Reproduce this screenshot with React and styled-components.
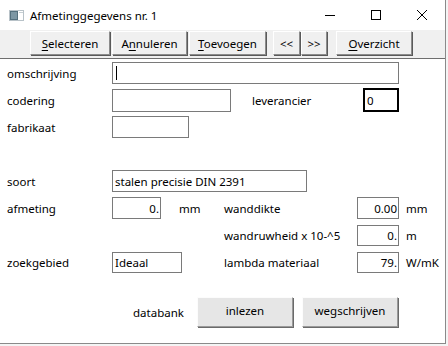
import styled, { createGlobalStyle } from "styled-components";

const GlobalStyle = createGlobalStyle`
  html, body {
    margin: 0;
    padding: 0;
    background: #f4f4f4;
  }
  body {
    font-family: "Noto Sans", "Open Sans", sans-serif;
    font-size: 11.5px;
    color: #000;
  }
`;

const Window = styled.div`
  width: 446px;
  height: 344px;
  box-sizing: border-box;
  background: #fff;
  border-right: 1px solid #8a8a8a;
  border-bottom: 1px solid #8a8a8a;
  display: flex;
  flex-direction: column;
  overflow: hidden;
`;

const TitleBar = styled.div`
  height: 30px;
  display: flex;
  align-items: center;
  background: #fff;
  padding-left: 9px;
`;

const Title = styled.span`
  margin-left: 6px;
  font-size: 11.5px;
  flex: 1;
`;

const Controls = styled.div`
  display: flex;
  height: 30px;
`;

const ControlButton = styled.div`
  width: ${(p) => p.$w}px;
  height: 30px;
  display: flex;
  align-items: center;
  justify-content: center;
`;

const Toolbar = styled.div`
  height: 29px;
  box-sizing: border-box;
  background: #f0f0f0;
  border-bottom: 1px solid #6e6e6e;
  display: flex;
  align-items: flex-start;
  padding: 1px 0 0 30px;
`;

const ToolButton = styled.div`
  width: ${(p) => p.$w}px;
  height: 24px;
  margin-left: ${(p) => p.$gap || 0}px;
  box-sizing: border-box;
  border-top: 1px solid #fff;
  border-left: 1px solid #fff;
  border-right: 1px solid #8c8c8c;
  border-bottom: 1px solid #8c8c8c;
  box-shadow: 1px 1px 0 #5a5a5a;
  display: flex;
  align-items: center;
  justify-content: center;
  font-size: 11.5px;
  u {
    text-decoration: underline;
    text-underline-offset: 2px;
  }
`;

const Content = styled.div`
  flex: 1;
  display: flex;
  flex-direction: column;
  padding-top: 3px;
`;

const Row = styled.div`
  display: flex;
  align-items: center;
  height: ${(p) => p.$h}px;
  margin-top: ${(p) => p.$gap || 0}px;
`;

const Label = styled.div`
  width: ${(p) => p.$w}px;
  padding-left: ${(p) => p.$pad ?? 0}px;
  box-sizing: border-box;
  font-size: 11.5px;
  flex-shrink: 0;
`;

const Spacer = styled.div`
  width: ${(p) => p.$w}px;
  flex-shrink: 0;
`;

const Field = styled.div`
  width: ${(p) => p.$w}px;
  height: ${(p) => p.$h || 22}px;
  box-sizing: border-box;
  border: ${(p) => (p.$focus ? "2px solid #000" : "1px solid #7a7a7a")};
  display: flex;
  align-items: center;
  justify-content: ${(p) => (p.$right ? "flex-end" : "flex-start")};
  padding: 0 ${(p) => (p.$right ? 1 : 2)}px 0 2px;
  font-size: 11.5px;
  flex-shrink: 0;
`;

const Caret = styled.span`
  width: 1px;
  height: 14px;
  background: #000;
  margin-left: 1px;
`;

const Unit = styled.div`
  margin-left: ${(p) => p.$gap}px;
  width: ${(p) => p.$w}px;
  font-size: 11.5px;
  flex-shrink: 0;
`;

const Button = styled.div`
  width: ${(p) => p.$w}px;
  height: 30px;
  margin-left: ${(p) => p.$gap || 0}px;
  box-sizing: border-box;
  background: #e6e6e6;
  border-top: 1px solid #fcfcfc;
  border-left: 1px solid #fcfcfc;
  border-right: 1px solid #9a9a9a;
  border-bottom: 1px solid #9a9a9a;
  box-shadow: 1px 1px 0 #6a6a6a;
  display: flex;
  align-items: center;
  justify-content: center;
  padding-bottom: 3px;
  font-size: 11.5px;
  flex-shrink: 0;
`;

const AppIcon = () => (
  <svg width="15" height="11" viewBox="0 0 15 11">
    <rect x="0.5" y="0.5" width="14" height="10" fill="#fff" stroke="#b8c2c8" />
    <rect x="1" y="1" width="8" height="9" fill="#55707e" />
    <rect x="2" y="2" width="6" height="7" fill="#7d97a4" />
    <rect x="10" y="2" width="4" height="1" fill="#c8d0d4" />
  </svg>
);

export default function App() {
  return (
    <>
      <GlobalStyle />
      <Window>
        <TitleBar>
          <AppIcon />
          <Title>Afmetinggegevens nr. 1</Title>
          <Controls>
            <ControlButton $w={46}>
              <svg width="10" height="10" viewBox="0 0 10 10">
                <path d="M0 5.5H10" stroke="#000" strokeWidth="1" />
              </svg>
            </ControlButton>
            <ControlButton $w={46}>
              <svg width="10" height="10" viewBox="0 0 10 10">
                <rect x="0.5" y="0.5" width="9" height="9" fill="none" stroke="#000" />
              </svg>
            </ControlButton>
            <ControlButton $w={46}>
              <svg width="10" height="10" viewBox="0 0 10 10">
                <path d="M0 0L10 10M10 0L0 10" stroke="#000" strokeWidth="1" />
              </svg>
            </ControlButton>
          </Controls>
        </TitleBar>

        <Toolbar>
          <ToolButton $w={80}><span><u>S</u>electeren</span></ToolButton>
          <ToolButton $w={75} $gap={2}><span>A<u>n</u>nuleren</span></ToolButton>
          <ToolButton $w={77} $gap={2}><span><u>T</u>oevoegen</span></ToolButton>
          <ToolButton $w={27} $gap={7}>&lt;&lt;</ToolButton>
          <ToolButton $w={26} $gap={1}>&gt;&gt;</ToolButton>
          <ToolButton $w={76} $gap={9}><span><u>O</u>verzicht</span></ToolButton>
        </Toolbar>

        <Content>
          <Row $h={22}>
            <Label $w={112} $pad={7}>omschrijving</Label>
            <Field $w={287}><Caret /></Field>
          </Row>
          <Row $h={24} $gap={4}>
            <Label $w={112} $pad={7}>codering</Label>
            <Field $w={119} $h={23} />
            <Spacer $w={21} />
            <Label $w={111}>leverancier</Label>
            <Field $w={36} $h={24} $focus>0</Field>
          </Row>
          <Row $h={22} $gap={4}>
            <Label $w={112} $pad={7}>fabrikaat</Label>
            <Field $w={77} />
          </Row>
          <Row $h={22} $gap={32}>
            <Label $w={112} $pad={7}>soort</Label>
            <Field $w={195}>stalen precisie DIN 2391</Field>
          </Row>
          <Row $h={22} $gap={5}>
            <Label $w={112} $pad={7}>afmeting</Label>
            <Field $w={49} $right>0.</Field>
            <Unit $gap={18} $w={45}>mm</Unit>
            <Label $w={133}>wanddikte</Label>
            <Field $w={42} $right>0.00</Field>
            <Unit $gap={7}>mm</Unit>
          </Row>
          <Row $h={21} $gap={6}>
            <Spacer $w={224} />
            <Label $w={133}>wandruwheid x 10-^5</Label>
            <Field $w={42} $h={21} $right>0.</Field>
            <Unit $gap={7}>m</Unit>
          </Row>
          <Row $h={21} $gap={6}>
            <Label $w={112} $pad={7}>zoekgebied</Label>
            <Field $w={70} $h={21}>Ideaal</Field>
            <Spacer $w={42} />
            <Label $w={133}>lambda materiaal</Label>
            <Field $w={42} $h={21} $right>79.</Field>
            <Unit $gap={7}>W/mK</Unit>
          </Row>
          <Row $h={30} $gap={24}>
            <Label $w={197} $pad={133}>databank</Label>
            <Button $w={96}>inlezen</Button>
            <Button $w={96} $gap={9}>wegschrijven</Button>
          </Row>
        </Content>
      </Window>
    </>
  );
}
